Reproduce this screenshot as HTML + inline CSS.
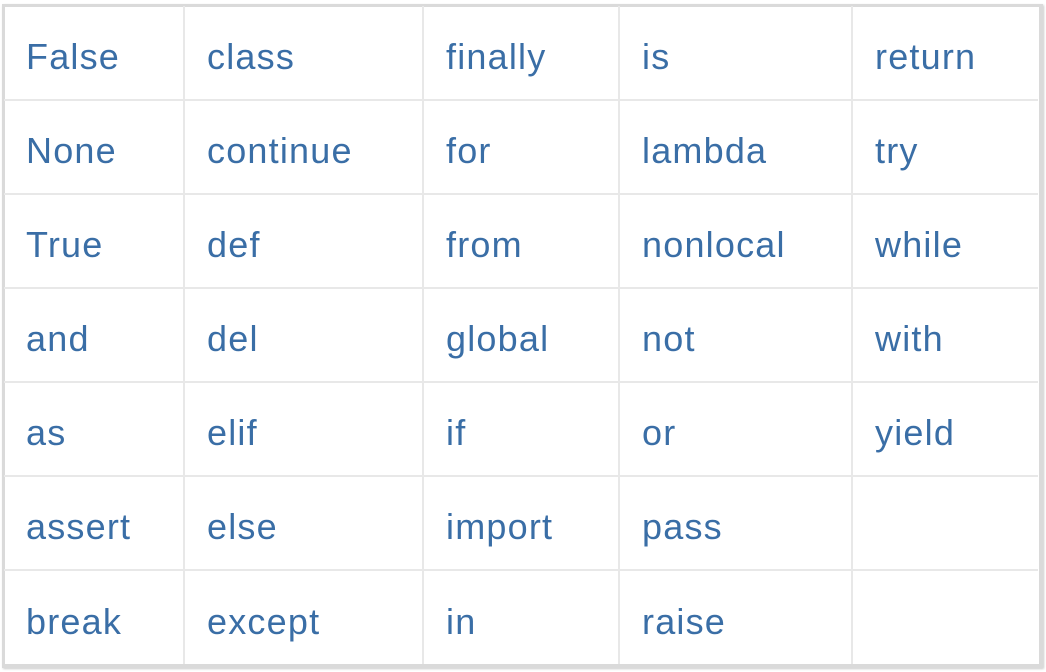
<!DOCTYPE html>
<html><head><meta charset="utf-8"><style>
html,body{margin:0;padding:0;background:#fff;width:1046px;height:672px;overflow:hidden}
.frame{position:absolute;left:2px;top:4px;width:1041px;height:664px;border:3px solid #dadada;border-right-width:4px;border-bottom-width:4px;box-sizing:border-box;box-shadow:1px 1px 2px #ccc}
table{position:absolute;left:4px;top:6px;border-collapse:collapse;table-layout:fixed}
td{border:2px solid #e8e8e8;height:94px;padding:8px 0 0 22px;font-family:"Liberation Sans",sans-serif;font-size:36px;letter-spacing:1.2px;color:#3a6ea6;vertical-align:middle;box-sizing:border-box}
tr:first-child td{border-top:none}
tr:last-child td{border-bottom:none}
td:first-child{border-left:none}
td:last-child{border-right:none}
</style></head><body>
<div class="frame"></div>
<table>
<colgroup><col style="width:180px"><col style="width:239px"><col style="width:196px"><col style="width:233px"><col style="width:186px"></colgroup>
<tr><td>False</td><td>class</td><td>finally</td><td>is</td><td>return</td></tr>
<tr><td>None</td><td>continue</td><td>for</td><td>lambda</td><td>try</td></tr>
<tr><td>True</td><td>def</td><td>from</td><td>nonlocal</td><td>while</td></tr>
<tr><td>and</td><td>del</td><td>global</td><td>not</td><td>with</td></tr>
<tr><td>as</td><td>elif</td><td>if</td><td>or</td><td>yield</td></tr>
<tr><td>assert</td><td>else</td><td>import</td><td>pass</td><td></td></tr>
<tr><td>break</td><td>except</td><td>in</td><td>raise</td><td></td></tr>
</table>
</body></html>
